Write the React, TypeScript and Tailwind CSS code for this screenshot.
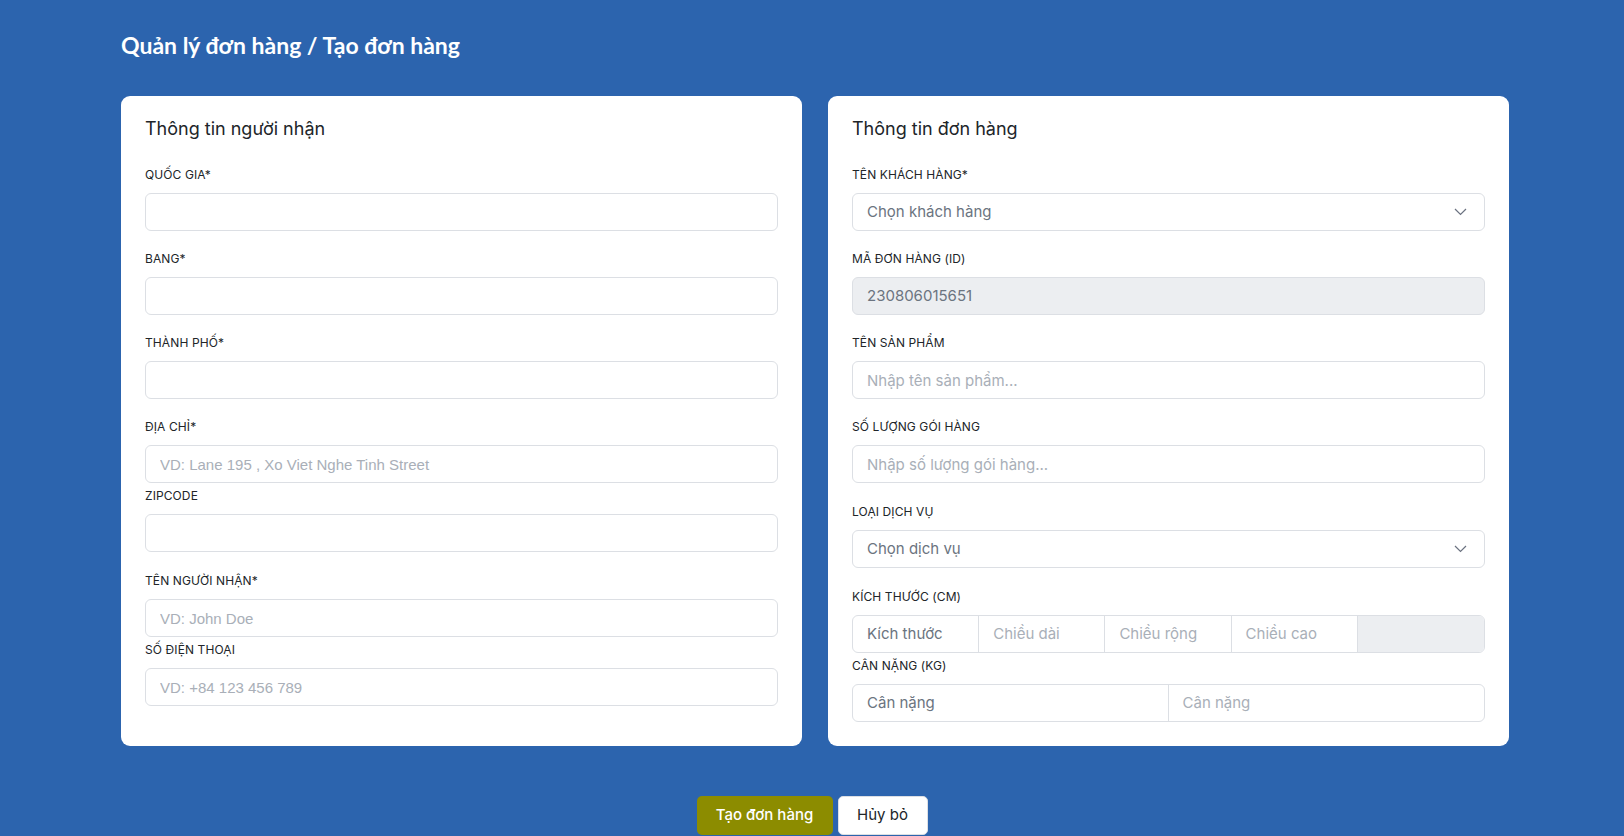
import React from "react";

const Label = ({ children, className = "" }: { children: React.ReactNode; className?: string }) => (
  <div className={`text-[12px] leading-4 text-[#212529] mb-[10px] tracking-[0.1px] ${className}`}>{children}</div>
);

const Input = ({ placeholder = "", arial = false }: { placeholder?: string; arial?: boolean }) => (
  <input
    placeholder={placeholder}
    className={`block w-full h-[38px] rounded-[6px] border border-[#dcdfe4] bg-white px-[14px] text-[15px] text-[#495057] placeholder:text-[#a9afb8] outline-none ${arial ? "font-['Liberation_Sans',Arial,sans-serif]" : ""}`}
  />
);

const Chevron = () => (
  <svg width="13" height="8" viewBox="0 0 13 8" fill="none" className="shrink-0">
    <polyline points="1,1 6.5,6.5 12,1" stroke="#6b7280" strokeWidth="1.2" fill="none" />
  </svg>
);

const Select = ({ text }: { text: string }) => (
  <div className="flex items-center justify-between w-full h-[38px] rounded-[6px] border border-[#dcdfe4] bg-white pl-[14px] pr-[17px] text-[15px] text-[#6b7480]">
    <span>{text}</span>
    <Chevron />
  </div>
);

export default function App() {
  return (
    <div className="min-h-[836px] bg-[#2c64ae] font-['Inter','Noto_Sans',sans-serif] pt-[31px]">
      <div className="w-[1388px] ml-[121px]">
        <h1 className="font-['Lato',sans-serif] font-bold text-[23px] leading-7 text-white">
          Quản lý đơn hàng / Tạo đơn hàng
        </h1>
        <div className="mt-[37px] grid grid-cols-2 gap-[26px]">
          {/* Left card */}
          <div className="bg-white rounded-[9px] px-6 pt-[21px] pb-[24px]">
            <h2 className="text-[18px] leading-6 text-[#212529] mb-[26px]">Thông tin người nhận</h2>
            <div className="mb-5">
              <Label>QUỐC GIA*</Label>
              <Input />
            </div>
            <div className="mb-5">
              <Label>BANG*</Label>
              <Input />
            </div>
            <div className="mb-5">
              <Label>THÀNH PHỐ*</Label>
              <Input />
            </div>
            <div className="mb-[5px]">
              <Label>ĐỊA CHỈ*</Label>
              <Input arial placeholder="VD: Lane 195 , Xo Viet Nghe Tinh Street" />
            </div>
            <div className="mb-[21px]">
              <Label>ZIPCODE</Label>
              <Input />
            </div>
            <div className="mb-[5px]">
              <Label>TÊN NGƯỜI NHẬN*</Label>
              <Input arial placeholder="VD: John Doe" />
            </div>
            <div>
              <Label>SỐ ĐIỆN THOẠI</Label>
              <Input arial placeholder="VD: +84 123 456 789" />
            </div>
          </div>

          {/* Right card */}
          <div className="bg-white rounded-[9px] px-6 pt-[21px] pb-[24px]">
            <h2 className="text-[18px] leading-6 text-[#212529] mb-[26px]">Thông tin đơn hàng</h2>
            <div className="mb-5">
              <Label>TÊN KHÁCH HÀNG*</Label>
              <Select text="Chọn khách hàng" />
            </div>
            <div className="mb-5">
              <Label>MÃ ĐƠN HÀNG (ID)</Label>
              <div className="flex items-center w-full h-[38px] rounded-[6px] border border-[#dcdfe4] bg-[#eceef1] px-[14px] text-[15px] text-[#6b7480]">
                230806015651
              </div>
            </div>
            <div className="mb-5">
              <Label>TÊN SẢN PHẨM</Label>
              <Input placeholder="Nhập tên sản phẩm..." />
            </div>
            <div className="mb-[21px]">
              <Label>SỐ LƯỢNG GÓI HÀNG</Label>
              <Input placeholder="Nhập số lượng gói hàng..." />
            </div>
            <div className="mb-[21px]">
              <Label>LOẠI DỊCH VỤ</Label>
              <Select text="Chọn dịch vụ" />
            </div>
            <div className="mb-[5px]">
              <Label>KÍCH THƯỚC (CM)</Label>
              <div className="grid grid-cols-5 h-[38px] rounded-[6px] border border-[#dcdfe4] overflow-hidden text-[15px]">
                <div className="flex items-center px-[14px] text-[#6b7480] border-r border-[#dcdfe4]">Kích thước</div>
                <div className="flex items-center px-[14px] text-[#a9afb8] border-r border-[#dcdfe4]">Chiều dài</div>
                <div className="flex items-center px-[14px] text-[#a9afb8] border-r border-[#dcdfe4]">Chiều rộng</div>
                <div className="flex items-center px-[14px] text-[#a9afb8] border-r border-[#dcdfe4]">Chiều cao</div>
                <div className="bg-[#eceef1]"></div>
              </div>
            </div>
            <div>
              <Label>CÂN NẶNG (KG)</Label>
              <div className="grid grid-cols-2 h-[38px] rounded-[6px] border border-[#dcdfe4] overflow-hidden text-[15px]">
                <div className="flex items-center px-[14px] text-[#6b7480] border-r border-[#dcdfe4]">Cân nặng</div>
                <div className="flex items-center px-[14px] text-[#a9afb8]">Cân nặng</div>
              </div>
            </div>
          </div>
        </div>
      </div>
      <div className="mt-[50px] flex justify-center gap-[5px] pb-2">
        <button className="h-[39px] w-[136px] rounded-[5px] bg-[#8c8c00] text-white text-[15px] font-medium">
          Tạo đơn hàng
        </button>
        <button className="h-[39px] w-[90px] rounded-[5px] bg-white border border-[#dcdfe4] text-[#212529] text-[15px]">
          Hủy bỏ
        </button>
      </div>
    </div>
  );
}
